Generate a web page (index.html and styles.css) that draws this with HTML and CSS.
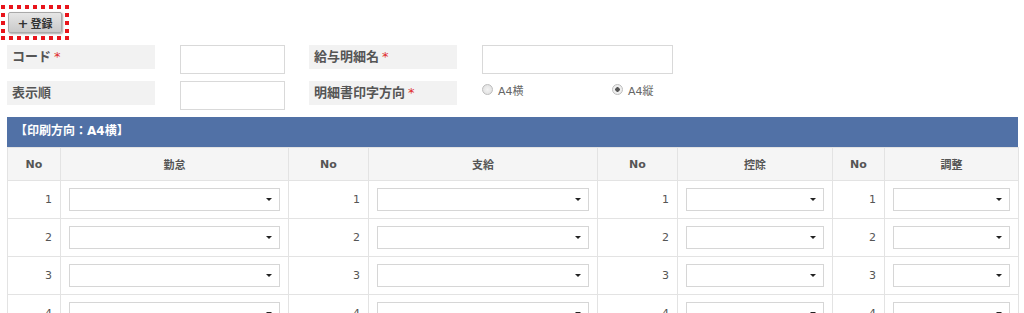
FILE: index.html
```html
<!DOCTYPE html>
<html lang="ja">
<head>
    <meta charset="UTF-8" />
    <title>給与明細設定</title>
    <link rel="stylesheet" href="styles.css">
</head>
<body>
    <div class="toolbar">
        <button class="btn-add"><span class="plus">+</span>登録</button>
    </div>

    <div class="form-grid">
        <div class="label">コード<span class="req">*</span></div>
        <input type="text" class="field field-short" />
        <div class="label">給与明細名<span class="req">*</span></div>
        <input type="text" class="field field-long" />

        <div class="label">表示順</div>
        <input type="text" class="field field-short" />
        <div class="label">明細書印字方向<span class="req">*</span></div>
        <div class="radios">
            <label class="radio"><input type="radio" name="dir" /> A4横</label>
            <label class="radio"><input type="radio" name="dir" checked /> A4縦</label>
        </div>
    </div>

    <div class="panel">
        <div class="panel-title">【印刷方向：A4横】</div>
        <table class="items">
            <colgroup>
                <col style="width:53px"><col style="width:228px">
                <col style="width:80px"><col style="width:229px">
                <col style="width:80px"><col style="width:155px">
                <col style="width:52px"><col style="width:134px">
            </colgroup>
            <thead>
                <tr>
                    <th>No</th><th>勤怠</th>
                    <th>No</th><th>支給</th>
                    <th>No</th><th>控除</th>
                    <th>No</th><th>調整</th>
                </tr>
            </thead>
            <tbody id="rows"></tbody>
        </table>
    </div>

    <script>
        var body = document.getElementById("rows");
        for (var i = 1; i <= 5; i++) {
            var html = "<tr>";
            for (var c = 0; c < 4; c++) {
                html += "<td class='num'>" + i + "</td>";
                html += "<td><span class='sel'><select><option></option></select></span></td>";
            }
            html += "</tr>";
            body.innerHTML += html;
        }
    </script>
</body>
</html>
```

FILE: styles.css
```css
:root {
    --label-bg: #f2f2f2;
    --text: #555;
    --line: #e3e3e3;
    --blue: #5171a6;
    --req: #e02b2b;
}
body {
    margin: 0;
    padding: 0 6px 0 7px;
    font-family: 'DejaVu Sans', 'Noto Sans CJK JP', sans-serif;
    color: var(--text);
    background: #fff;
}
.toolbar {
    height: 45px;
    padding-top: 12px;
    box-sizing: border-box;
}
.btn-add {
    position: relative;
    display: block;
    margin-left: 1px;
    width: 54px;
    height: 21px;
    padding: 0;
    font-family: inherit;
    font-size: 11px;
    font-weight: bold;
    color: #333;
    background: linear-gradient(#e6e6e6, #c9c9c9);
    border: 1px solid #a9a9a9;
    border-radius: 2px;
    box-shadow: 1px 1px 2px rgba(0,0,0,0.35);
}
/* square-dotted focus frame */
.btn-add::before {
    content: "";
    position: absolute;
    left: -8px;
    top: -8px;
    right: -8px;
    bottom: -8px;
    background:
        repeating-linear-gradient(90deg, #e8141b 0 4px, transparent 4px 8px) top left / 100% 4px no-repeat,
        repeating-linear-gradient(90deg, #e8141b 0 4px, transparent 4px 8px) bottom left / 100% 4px no-repeat,
        repeating-linear-gradient(180deg, #e8141b 0 4px, transparent 4px 8px) top left / 4px 100% no-repeat,
        repeating-linear-gradient(180deg, #e8141b 0 4px, transparent 4px 8px) top right / 4px 100% no-repeat;
}
.btn-add .plus {
    font-size: 13px;
    margin-right: 2px;
}
.form-grid {
    display: grid;
    grid-template-columns: 173px 129px 173px 216px;
    grid-template-rows: 29px 29px;
    row-gap: 7px;
}
.label {
    width: 148px;
    box-sizing: border-box;
    height: 24px;
    line-height: 24px;
    background: var(--label-bg);
    padding-left: 5px;
    font-size: 13px;
    font-weight: bold;
    color: #555;
}
.req {
    color: var(--req);
    margin-left: 3px;
    font-weight: normal;
}
.field {
    box-sizing: border-box;
    height: 29px;
    border: 1px solid #d9d9d9;
    margin: 0;
}
.field-short {
    width: 105px;
}
.field-long {
    width: 191px;
}
.radios {
    display: flex;
    align-items: center;
    height: 17px;
}
.radio {
    display: flex;
    align-items: center;
    flex: 0 0 130px;
    font-size: 11px;
    color: #666;
}
.radio input {
    appearance: none;
    -webkit-appearance: none;
    box-sizing: border-box;
    width: 11px;
    height: 11px;
    margin: 0 5px 0 0;
    border: 1px solid #bdbdbd;
    border-radius: 50%;
    background: radial-gradient(circle, #f4f4f4, #dcdcdc);
}
.radio input:checked {
    background: radial-gradient(circle, #555 0 2px, #eee 2.5px);
}
.panel {
    margin-top: 7px;
    width: 1011px;
}
.panel-title {
    height: 30px;
    line-height: 28px;
    background: var(--blue);
    color: #fff;
    font-size: 12px;
    font-weight: bold;
    padding-left: 8px;
}
.items {
    width: 1011px;
    table-layout: fixed;
    border-collapse: collapse;
}
.items th, .items td {
    border: 1px solid var(--line);
}
.items th {
    height: 30px;
    background: #f5f5f5;
    font-size: 11px;
    font-weight: bold;
    color: #555;
}
.items td {
    height: 37px;
    padding: 0 8px;
    font-size: 11px;
}
.items td.num {
    text-align: right;
    color: #555;
}
.sel {
    position: relative;
    display: block;
}
.sel select {
    display: block;
    width: 100%;
    height: 23px;
    appearance: none;
    -webkit-appearance: none;
    background: #fff;
    border: 1px solid #d6d6d6;
    border-radius: 0;
    margin: 0;
}
.sel::after {
    content: "";
    position: absolute;
    right: 8px;
    top: 10px;
    border-left: 3px solid transparent;
    border-right: 3px solid transparent;
    border-top: 3px solid #222;
}
```
